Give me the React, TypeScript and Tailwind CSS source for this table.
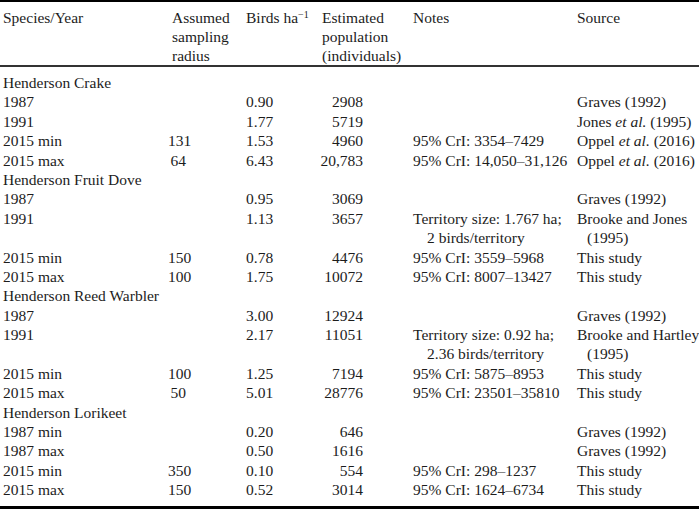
import type { ReactNode } from "react";

type Row =
  | { group: string }
  | {
      label?: string;
      radius?: string;
      birds?: string;
      pop?: string;
      notes?: string;
      source?: ReactNode;
      cont?: boolean;
    };

const oppel = (
  <>
    Oppel <i>et al.</i> (2016)
  </>
);

const rows: Row[] = [
  { group: "Henderson Crake" },
  { label: "1987", birds: "0.90", pop: "2908", source: "Graves (1992)" },
  {
    label: "1991",
    birds: "1.77",
    pop: "5719",
    source: (
      <>
        Jones <i>et al.</i> (1995)
      </>
    ),
  },
  { label: "2015 min", radius: "131", birds: "1.53", pop: "4960", notes: "95% CrI: 3354–7429", source: oppel },
  { label: "2015 max", radius: "64", birds: "6.43", pop: "20,783", notes: "95% CrI: 14,050–31,126", source: oppel },
  { group: "Henderson Fruit Dove" },
  { label: "1987", birds: "0.95", pop: "3069", source: "Graves (1992)" },
  { label: "1991", birds: "1.13", pop: "3657", notes: "Territory size: 1.767 ha;", source: "Brooke and Jones" },
  { cont: true, notes: "2 birds/territory", source: "(1995)" },
  { label: "2015 min", radius: "150", birds: "0.78", pop: "4476", notes: "95% CrI: 3559–5968", source: "This study" },
  { label: "2015 max", radius: "100", birds: "1.75", pop: "10072", notes: "95% CrI: 8007–13427", source: "This study" },
  { group: "Henderson Reed Warbler" },
  { label: "1987", birds: "3.00", pop: "12924", source: "Graves (1992)" },
  { label: "1991", birds: "2.17", pop: "11051", notes: "Territory size: 0.92 ha;", source: "Brooke and Hartley" },
  { cont: true, notes: "2.36 birds/territory", source: "(1995)" },
  { label: "2015 min", radius: "100", birds: "1.25", pop: "7194", notes: "95% CrI: 5875–8953", source: "This study" },
  { label: "2015 max", radius: "50", birds: "5.01", pop: "28776", notes: "95% CrI: 23501–35810", source: "This study" },
  { group: "Henderson Lorikeet" },
  { label: "1987 min", birds: "0.20", pop: "646", source: "Graves (1992)" },
  { label: "1987 max", birds: "0.50", pop: "1616", source: "Graves (1992)" },
  { label: "2015 min", radius: "350", birds: "0.10", pop: "554", notes: "95% CrI: 298–1237", source: "This study" },
  { label: "2015 max", radius: "150", birds: "0.52", pop: "3014", notes: "95% CrI: 1624–6734", source: "This study" },
];

const grid = "grid grid-cols-[168px_74px_76px_91px_164px_126px]";

const App = () => {
  return (
    <div
      className="w-[699px] h-[509px] overflow-hidden bg-white text-[#1c1c1c] text-[15.5px]"
      style={{ fontFamily: '"Liberation Serif", "DejaVu Serif", serif' }}
    >
      {/* Header */}
      <div className={`${grid} border-t-2 border-black border-b-2 border-b-[#333] pt-[6px] leading-[19px]`}>
        <div className="pl-[3px]">Species/Year</div>
        <div className="pl-[4px]">
          Assumed
          <br />
          sampling
          <br />
          radius
        </div>
        <div className="pl-[4px]">
          Birds ha<sup className="text-[10px]">−1</sup>
        </div>
        <div className="pl-[4px]">
          Estimated
          <br />
          population
          <br />
          (individuals)
        </div>
        <div className="pl-[4px]">Notes</div>
        <div className="pl-[4px]">Source</div>
      </div>

      {/* Body */}
      <div className="border-b-[3px] border-black pt-[6px] pb-[6px]">
        {rows.map((row, i) =>
          "group" in row ? (
            <div key={i} className="h-[19.4px] leading-[19.4px] pl-[3px] whitespace-nowrap">
              {row.group}
            </div>
          ) : (
            <div key={i} className={`${grid} h-[19.4px] leading-[19.4px] whitespace-nowrap`}>
              <div className="pl-[3px]">{row.label}</div>
              <div className="text-right pr-[56px]">{row.radius}</div>
              <div className="pl-[4px]">{row.birds}</div>
              <div className="text-right pr-[46px]">{row.pop}</div>
              <div className={row.cont ? "pl-[18px]" : "pl-[4px]"}>{row.notes}</div>
              <div className={row.cont ? "pl-[14px]" : "pl-[4px]"}>{row.source}</div>
            </div>
          )
        )}
      </div>
    </div>
  );
};

export default App;
